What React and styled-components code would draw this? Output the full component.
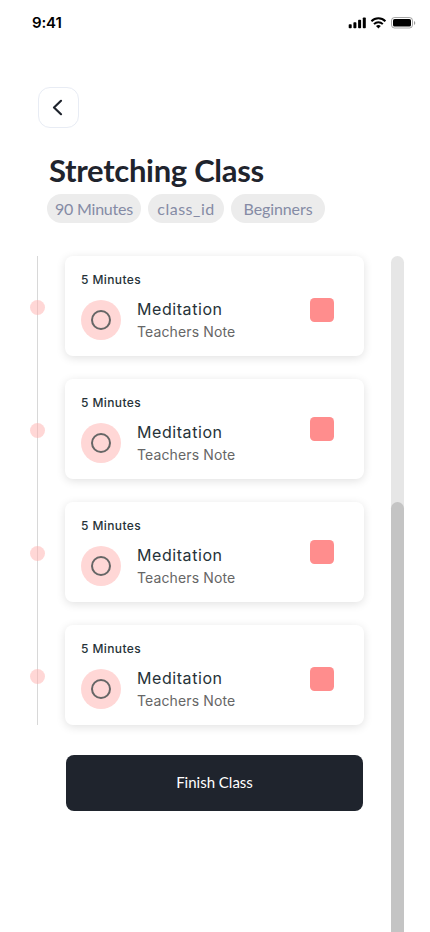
import React from 'react';
import styled, { createGlobalStyle } from 'styled-components';

const Global = createGlobalStyle`
  * { box-sizing: border-box; }
  body { margin: 0; background: #fff; overflow: hidden; }
  button { font: inherit; border: 0; padding: 0; }
`;

const Screen = styled.div`
  width: 430px;
  height: 932px;
  overflow: hidden;
  background: #fff;
  font-family: Inter, sans-serif;
  color: #1f242d;
`;

const StatusBar = styled.header`
  display: flex;
  justify-content: space-between;
  align-items: center;
  height: 46px;
  padding: 0 14px 0 32px;
`;

const Time = styled.span`
  font-size: 15px;
  line-height: 18px;
  font-weight: 600;
  letter-spacing: -0.15px;
  color: #000;
`;

const StatusIcons = styled.svg`
  display: block;
  width: 68px;
  height: 14px;
`;

const BackButton = styled.button`
  display: flex;
  align-items: center;
  justify-content: center;
  width: 41px;
  height: 41px;
  margin: 41px 0 0 38px;
  border: 1px solid #e8ecf4;
  border-radius: 12px;
  background: #fff;
`;

const Title = styled.h1`
  margin: 22px 0 0 49px;
  font-family: Lato, sans-serif;
  font-size: 31px;
  line-height: 40px;
  font-weight: 700;
  letter-spacing: -0.3px;
  white-space: nowrap;
`;

const Tags = styled.div`
  display: flex;
  gap: 7px;
  margin: 4px 0 0 47px;
`;

const Tag = styled.span`
  width: ${(p) => p.$width}px;
  height: 29px;
  border-radius: 15px;
  background: #ececec;
  color: #858ba5;
  font-family: Lato, sans-serif;
  font-size: 16px;
  line-height: 30px;
  letter-spacing: ${(p) => p.$spacing}px;
  text-align: center;
  white-space: nowrap;
`;

const Content = styled.main`
  display: flex;
  align-items: flex-start;
  margin-top: 33px;
  padding-left: 30px;
`;

const Timeline = styled.div`
  display: flex;
  flex-direction: column;
  align-items: center;
  gap: 108px;
  width: 15px;
  height: 469px;
  padding-top: 44px;
  background: linear-gradient(#d8d8d8, #d8d8d8) 7px 0 / 1px 100% no-repeat;
`;

const Dot = styled.span`
  width: 15px;
  height: 15px;
  flex: none;
  border-radius: 50%;
  background: rgba(255, 176, 174, 0.5);
`;

const Lessons = styled.div`
  display: flex;
  flex-direction: column;
  gap: 23px;
  width: 299px;
  margin-left: 20px;
`;

const Card = styled.article`
  display: grid;
  grid-template-columns: 56px 173px 24px;
  grid-template-rows: 43.5px 56.5px;
  height: 100px;
  padding: 0 16px;
  border-radius: 8px;
  background: #fff;
  box-shadow: 0 2px 10px rgba(0, 0, 0, 0.12);
`;

const Duration = styled.div`
  grid-column: 1 / 3;
  grid-row: 1;
  padding-top: 16px;
  font-size: 12px;
  line-height: 16px;
  font-weight: 500;
  letter-spacing: 0.4px;
  color: #263238;
`;

const Activity = styled.div`
  grid-column: 1;
  grid-row: 2;
  display: flex;
  align-items: center;
  justify-content: center;
  width: 40px;
  height: 40px;
  border-radius: 50%;
  background: #ffd7d6;
`;

const Ring = styled.span`
  width: 20px;
  height: 20px;
  border: 2px solid #666;
  border-radius: 50%;
`;

const Details = styled.div`
  grid-column: 2;
  grid-row: 2;
  margin-top: -1.5px;
`;

const Name = styled.div`
  font-size: 16px;
  line-height: 22px;
  letter-spacing: 0.57px;
  color: #263238;
`;

const Note = styled.div`
  font-size: 14px;
  line-height: 20px;
  margin-top: 2px;
  letter-spacing: 0.13px;
  color: #666;
`;

const StopMark = styled.span`
  grid-column: 3;
  grid-row: 1 / 3;
  width: 24px;
  height: 24px;
  margin-left: 0.4px;
  margin-top: ${(p) => p.$top}px;
  border-radius: 4.5px;
  background: #ff8d8d;
`;

const FinishButton = styled.button`
  width: 297px;
  height: 56px;
  margin: 7px 0 0 1px;
  padding-bottom: 1px;
  border-radius: 8px;
  background: #1f242d;
  color: #fff;
  font-family: Lato, sans-serif;
  font-size: 15px;
  line-height: 55px;
`;

const ScrollTrack = styled.div`
  width: 13px;
  height: 676px;
  margin-left: 27px;
  padding-top: 246px;
  border-radius: 7px 7px 0 0;
  background: #e6e6e6;
`;

const ScrollThumb = styled.div`
  height: 430px;
  border-radius: 7px 7px 0 0;
  background: #c4c4c4;
`;

const lessons = [42.4, 38.4, 38.4, 42.4].map((markTop) => ({
  duration: '5 Minutes',
  name: 'Meditation',
  note: 'Teachers Note',
  markTop,
}));

const tags = [
  { label: '90 Minutes', width: 94, spacing: -0.22 },
  { label: 'class_id', width: 76, spacing: 0.5 },
  { label: 'Beginners', width: 94, spacing: -0.1 },
];

export default function App() {
  return (
    <>
      <Global />
      <Screen>
        <StatusBar>
          <Time>9:41</Time>
          <StatusIcons viewBox="0 0 68 14" fill="#000">
            <rect x="0.7" y="8.2" width="3" height="4.1" rx="0.8" />
            <rect x="5.4" y="6.2" width="3" height="6.1" rx="0.8" />
            <rect x="10.1" y="3.8" width="3" height="8.5" rx="0.8" />
            <rect x="14.8" y="1.5" width="3" height="10.8" rx="0.8" />
            <g fill="none" stroke="#000" strokeWidth="2">
              <path d="M23.4 5.2a10 10 0 0 1 14 0" />
              <path d="M26 8.1a6.3 6.3 0 0 1 8.8 0" />
            </g>
            <path d="M28 10.1a3.5 3.5 0 0 1 4.8 0L30.4 12.5z" />
            <rect x="43.5" y="1.5" width="21" height="10.5" rx="3" fill="none" stroke="#000" strokeOpacity="0.35" />
            <rect x="45" y="3" width="18" height="7.5" rx="1.6" />
            <path d="M66 5v4a2.2 2.2 0 0 0 0-4z" opacity="0.4" />
          </StatusIcons>
        </StatusBar>

        <BackButton aria-label="Back">
          <svg width="19" height="19" viewBox="0 0 19 19" fill="none" stroke="#1f242d" strokeWidth="2.2" strokeLinecap="round" strokeLinejoin="round">
            <path d="M12 2.8L5 9.5l7 6.7" />
          </svg>
        </BackButton>

        <Title>Stretching Class</Title>
        <Tags>
          {tags.map((t) => (
            <Tag key={t.label} $width={t.width} $spacing={t.spacing}>{t.label}</Tag>
          ))}
        </Tags>

        <Content>
          <Timeline>
            {lessons.map((_, i) => <Dot key={i} />)}
          </Timeline>
          <Lessons>
            {lessons.map((lesson, i) => (
              <Card key={i}>
                <Duration>{lesson.duration}</Duration>
                <Activity><Ring /></Activity>
                <Details>
                  <Name>{lesson.name}</Name>
                  <Note>{lesson.note}</Note>
                </Details>
                <StopMark $top={lesson.markTop} />
              </Card>
            ))}
            <FinishButton>Finish Class</FinishButton>
          </Lessons>
          <ScrollTrack>
            <ScrollThumb />
          </ScrollTrack>
        </Content>
      </Screen>
    </>
  );
}
